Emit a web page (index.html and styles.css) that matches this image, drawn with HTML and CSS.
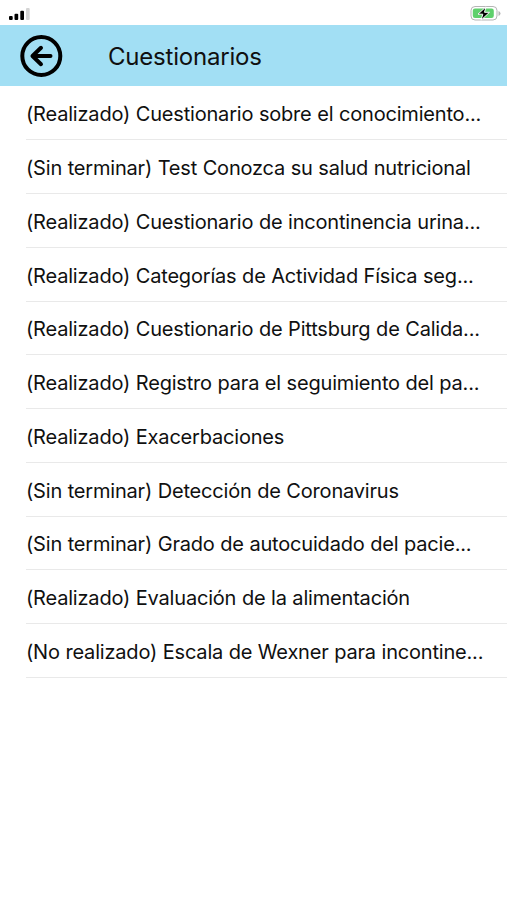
FILE: index.html
```html
<!DOCTYPE html>
<html lang="es">
<head>
<meta charset="utf-8">
<title>Cuestionarios</title>
<link rel="stylesheet" href="styles.css">
</head>
<body>
<div class="status">
<svg class="signal" width="22" height="13" viewBox="0 0 22 13"><rect x="0" y="8" width="3.7" height="4" rx="1"/><rect x="5.5" y="5.8" width="3.7" height="6.2" rx="1"/><rect x="11.3" y="2.7" width="3.7" height="9.3" rx="1"/><rect x="17" y="0" width="3.7" height="12" rx="1" fill="#d4d4d4"/></svg>
<svg class="battery" width="31" height="15" viewBox="0 0 31 15"><rect x="1" y=".5" width="26" height="13.5" rx="4" fill="#fff" stroke="#b5b5b5"/><rect x="2.8" y="2.5" width="21" height="9.5" rx="2.2" fill="#5fd06c"/><path d="M28.5 5v5q2-.8 2-2.5t-2-2.5z" fill="#b5b5b5"/><path d="M16 .8 8 8.2h4.8L11 14.2l8.5-7.9h-5z" stroke="#fff"/></svg>
</div>
<header class="bar">
<svg class="back" width="44" height="44" viewBox="0 0 44 44" fill="none" stroke="#000" stroke-width="4" stroke-linecap="round" stroke-linejoin="round"><circle cx="22.3" cy="22" r="19"/><path d="M31.5 22H14M22 13.8 13.5 22l8.5 8.2"/></svg>
<h1>Cuestionarios</h1>
</header>
<ul class="list">
<li><span>(Realizado) Cuestionario sobre el conocimiento...</span></li>
<li><span>(Sin terminar) Test Conozca su salud nutricional</span></li>
<li><span>(Realizado) Cuestionario de incontinencia urina...</span></li>
<li><span>(Realizado) Categorías de Actividad Física seg...</span></li>
<li><span>(Realizado) Cuestionario de Pittsburg de Calida...</span></li>
<li><span>(Realizado) Registro para el seguimiento del pa...</span></li>
<li><span>(Realizado) Exacerbaciones</span></li>
<li><span>(Sin terminar) Detección de Coronavirus</span></li>
<li><span>(Sin terminar) Grado de autocuidado del pacie...</span></li>
<li><span>(Realizado) Evaluación de la alimentación</span></li>
<li><span>(No realizado) Escala de Wexner para incontine...</span></li>
</ul>
</body>
</html>
```
FILE: styles.css
```css
body { margin: 0; background: #fff; color: #101010; font-family: Inter, sans-serif; }
.status { display: flex; justify-content: space-between; box-sizing: border-box; height: 25px; padding: 6px 6px 0 9px; }
.signal { margin-top: 2px; }
.bar { display: flex; align-items: center; height: 61px; background: #a2dff4; }
.back { margin-left: 19px; }
h1 { margin: 0 0 0 45px; padding-top: 2px; font-size: 24px; font-weight: 400; letter-spacing: -0.2px; }
.list { margin: 0; padding: 0.5px 0 0 26px; list-style: none; }
.list li { display: flex; align-items: center; box-sizing: border-box; height: 53.75px; padding-top: 3px; border-bottom: 1px solid #e9e9e9; font-size: 20px; letter-spacing: -0.19px; word-spacing: 0.2px; white-space: nowrap; }
```
